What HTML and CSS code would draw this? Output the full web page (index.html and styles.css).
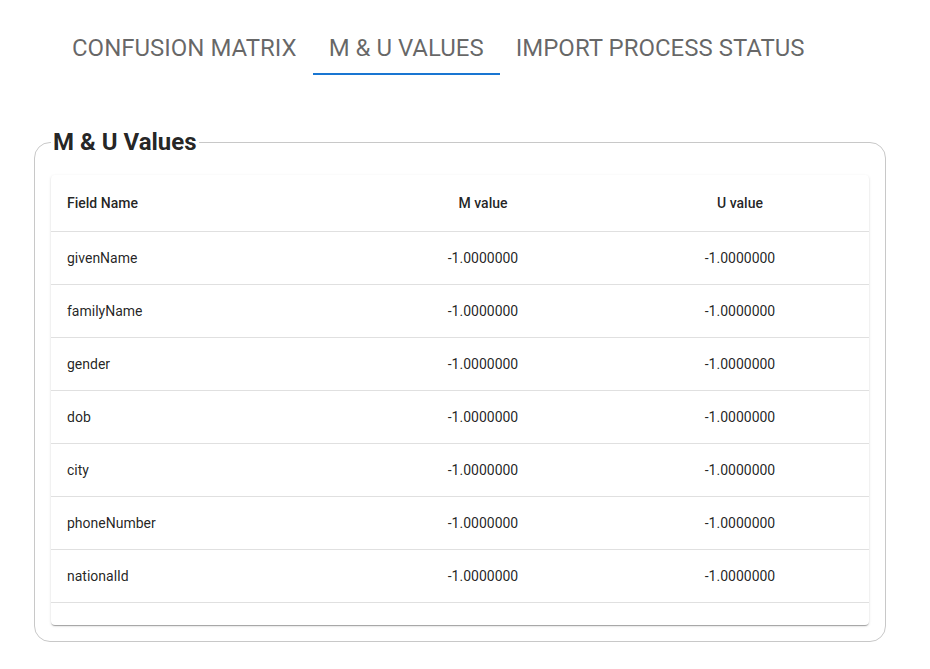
FILE: index.html
```html
<!DOCTYPE html>
<html lang="en">
<head>
<meta charset="utf-8">
<title>M &amp; U Values</title>
<link rel="stylesheet" href="styles.css">
</head>
<body>
<div class="page">
  <nav class="tabs">
    <div class="tab">Confusion Matrix</div>
    <div class="tab active">M &amp; U Values</div>
    <div class="tab">Import Process Status</div>
  </nav>
  <fieldset class="panel">
    <legend class="panel-title">M &amp; U Values</legend>
    <div class="paper">
      <table class="grid">
        <colgroup>
          <col class="c1"><col class="c2"><col class="c3">
        </colgroup>
        <thead>
          <tr><th class="left">Field Name</th><th>M value</th><th>U value</th></tr>
        </thead>
        <tbody>
          <tr><td class="left">givenName</td><td>-1.0000000</td><td>-1.0000000</td></tr>
          <tr><td class="left">familyName</td><td>-1.0000000</td><td>-1.0000000</td></tr>
          <tr><td class="left">gender</td><td>-1.0000000</td><td>-1.0000000</td></tr>
          <tr><td class="left">dob</td><td>-1.0000000</td><td>-1.0000000</td></tr>
          <tr><td class="left">city</td><td>-1.0000000</td><td>-1.0000000</td></tr>
          <tr><td class="left">phoneNumber</td><td>-1.0000000</td><td>-1.0000000</td></tr>
          <tr><td class="left">nationalId</td><td>-1.0000000</td><td>-1.0000000</td></tr>
        </tbody>
      </table>
      <div class="paper-foot"></div>
    </div>
  </fieldset>
</div>
</body>
</html>
```
FILE: styles.css
```css
* { box-sizing: border-box; }
html, body {
  margin: 0;
  padding: 0;
  background: #fff;
  font-family: Roboto, "Liberation Sans", Arial, sans-serif;
  color: rgba(0,0,0,0.87);
}
.page {
  padding: 22px 44px 0 34px;
}
.tabs {
  display: flex;
  margin-left: 22px;
  margin-bottom: 52px;
}
.tab {
  padding: 12px 16px 11px;
  font-size: 24px;
  line-height: 28px;
  text-transform: uppercase;
  color: rgba(0,0,0,0.6);
  border-bottom: 2px solid transparent;
}
.tab.active {
  border-bottom-color: #1976d2;
}
.panel {
  margin: 0;
  border: 1px solid #c8c8c8;
  border-radius: 16px;
  padding: 0 16px 16px 16px;
  min-width: 0;
}
.panel-title {
  font-size: 24px;
  font-weight: 700;
  line-height: 30px;
  padding: 0 2px;
  margin-left: 0;
  color: rgba(0,0,0,0.87);
}
.paper {
  margin-top: 18px;
  background: #fff;
  border-radius: 4px;
  box-shadow: 0 2px 1px -1px rgba(0,0,0,0.2), 0 1px 1px 0 rgba(0,0,0,0.14), 0 1px 3px 0 rgba(0,0,0,0.12);
  overflow: hidden;
}
.grid {
  width: 100%;
  border-collapse: collapse;
  table-layout: fixed;
}
.c1 { width: 304px; }
.c2 { width: 256px; }
.c3 { width: 258px; }
.grid th, .grid td {
  font-size: 14px;
  line-height: 20px;
  text-align: center;
  border-bottom: 1px solid #e0e0e0;
  padding: 16px;
}
.grid th {
  font-weight: 500;
  height: 56px;
}
.grid td {
  font-weight: 400;
  height: 53px;
}
.grid .left { text-align: left; }
.paper-foot {
  height: 22px;
}
```
